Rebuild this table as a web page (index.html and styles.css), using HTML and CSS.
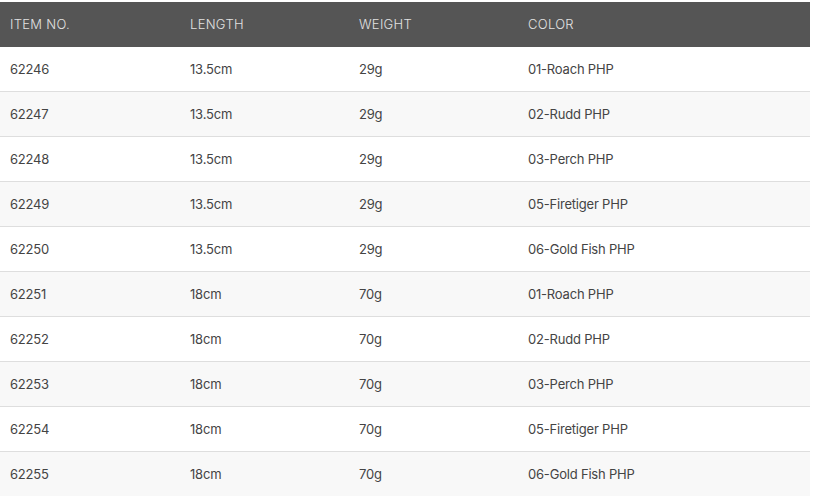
FILE: index.html
```html
<!DOCTYPE html>
<html>
<head>
<meta charset="utf-8">
<link rel="stylesheet" href="styles.css">
</head>
<body>
<table class="spec">
  <thead>
    <tr><th class="c1">ITEM NO.</th><th class="c2">LENGTH</th><th class="c3">WEIGHT</th><th class="c4">COLOR</th></tr>
  </thead>
  <tbody>
    <tr><td>62246</td><td>13.5cm</td><td>29g</td><td>01-Roach PHP</td></tr>
    <tr><td>62247</td><td>13.5cm</td><td>29g</td><td>02-Rudd PHP</td></tr>
    <tr><td>62248</td><td>13.5cm</td><td>29g</td><td>03-Perch PHP</td></tr>
    <tr><td>62249</td><td>13.5cm</td><td>29g</td><td>05-Firetiger PHP</td></tr>
    <tr><td>62250</td><td>13.5cm</td><td>29g</td><td>06-Gold Fish PHP</td></tr>
    <tr><td>62251</td><td>18cm</td><td>70g</td><td>01-Roach PHP</td></tr>
    <tr><td>62252</td><td>18cm</td><td>70g</td><td>02-Rudd PHP</td></tr>
    <tr><td>62253</td><td>18cm</td><td>70g</td><td>03-Perch PHP</td></tr>
    <tr><td>62254</td><td>18cm</td><td>70g</td><td>05-Firetiger PHP</td></tr>
    <tr><td>62255</td><td>18cm</td><td>70g</td><td>06-Gold Fish PHP</td></tr>
  </tbody>
</table>
</body>
</html>
```
FILE: styles.css
```css
html, body { margin: 0; padding: 0; background: #fff; }
body { padding-top: 2px; font-family: Inter, "Noto Sans", sans-serif; }
.spec { width: 810px; border-collapse: collapse; table-layout: fixed; }
.spec th, .spec td { text-align: left; padding: 0 0 0 10px; }
.spec .c1 { width: 170px; }
.spec .c2 { width: 159px; }
.spec .c3 { width: 159px; }
.spec th {
  background: #555555; color: #e2e2e2; height: 43px; padding-bottom: 2px;
  font-size: 13px; font-weight: 300; letter-spacing: 0.3px;
}
.spec td {
  height: 44px; font-size: 13px; color: #444; font-weight: 400;
  border-bottom: 1px solid #dedede; letter-spacing: -0.2px;
}
.spec tbody tr:nth-child(even) td { background: #f8f8f8; }
.spec tbody tr:last-child td { border-bottom: none; height: 44px; }
```
